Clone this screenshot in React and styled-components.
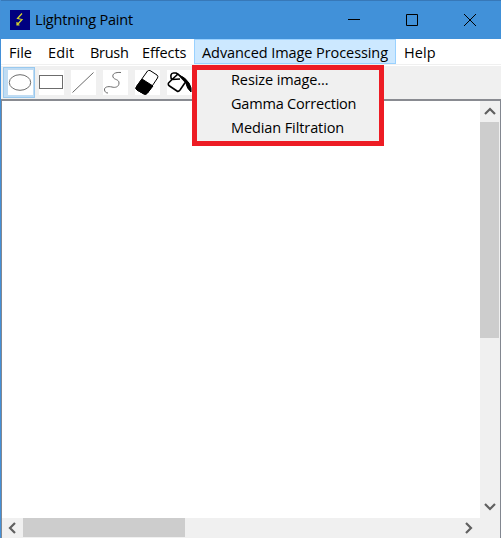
import React from "react";
import styled, { createGlobalStyle } from "styled-components";

const GlobalStyle = createGlobalStyle`
  * { box-sizing: border-box; }
  body { margin: 0; overflow: hidden; background: #fff; }
`;

const Window = styled.div`
  position: relative;
  display: flex;
  flex-direction: column;
  width: 501px;
  height: 538px;
  border-left: 1px solid #4390d8;
  background: #fff;
  color: #000;
  font: 14.5px/20px "Open Sans", "Noto Sans", sans-serif;
  white-space: nowrap;
  overflow: hidden;
`;

const TitleBar = styled.header`
  display: flex;
  align-items: center;
  flex: 0 0 39px;
  margin-left: -1px;
  padding: 0 2px 0 10px;
  border-top: 1px solid #3778b8;
  background: #4191d9;
`;

const AppIcon = styled.svg`
  width: 20px;
  height: 20px;
  margin: 0 5px 0 0;
`;

const Title = styled.span`
  flex: 1;
  letter-spacing: ${(p) => p.$track}px;
`;

const WindowButton = styled.div`
  display: grid;
  place-items: center;
  width: 58px;
  height: 38px;
`;

const MenuBar = styled.nav`
  display: flex;
  flex: 0 0 25px;
`;

const MenuItem = styled.div`
  width: ${(p) => p.$width}px;
  height: 25px;
  padding: 3px 0 0 7px;
  border: 1px solid ${(p) => (p.$open ? "#99d1ff" : "transparent")};
  background: ${(p) => (p.$open ? "#cce8ff" : "transparent")};
  letter-spacing: ${(p) => p.$track}px;
`;

const Toolbar = styled.div`
  display: flex;
  flex: 0 0 35px;
  padding: 1px 0 0 2px;
  border-top: 1px solid #f0f0f0;
  background: #f0f0f0;
  box-shadow: inset 0 1px #fff;
`;

const ToolButton = styled.button`
  display: flex;
  align-items: flex-start;
  justify-content: flex-start;
  width: 32px;
  height: 31px;
  margin-top: 1px;
  padding: ${(p) => (p.$active ? "2px 0 0 4px" : "2px 0 0 3px")};
  border: 1px solid ${(p) => (p.$active ? "#99c9ef" : "transparent")};
  background: ${(p) => (p.$active ? "#c0dcf3" : "transparent")};
`;

const ToolIcon = styled.svg`
  display: block;
  flex: none;
  width: 25px;
  height: 25px;
  background: #fff;
  fill: none;
  stroke: #6c6c6c;
`;

const Workspace = styled.main`
  display: grid;
  flex: 1;
  grid-template: 417px 20px / 478px 20px;
  border: solid #828790;
  border-width: 2px 1px 0 1px;
  border-top-color: #898b91;
`;

const Canvas = styled.div`
  background: #fff;
`;

const ScrollBar = styled.div`
  display: flex;
  flex-direction: ${(p) => (p.$vertical ? "column" : "row")};
  padding: ${(p) => (p.$vertical ? "0 1px 2px 0" : "0 2px 1px 0")};
  background: #f0f0f0;
`;

const ScrollArrow = styled.div`
  display: grid;
  place-items: center;
  flex: 0 0 21px;
`;

const ScrollThumb = styled.div`
  flex: 0 0 ${(p) => p.$length}px;
  background: #cdcdcd;
`;

const ScrollGap = styled.div`
  flex: 1;
`;

const Corner = styled.div`
  background: #f0f0f0;
`;

const Dropdown = styled.div`
  position: absolute;
  top: 65px;
  left: 191px;
  width: 192px;
  height: 81px;
  padding: 0 0 0 34px;
  border: 5px solid #ed1c24;
  background: #f0f0f0;
`;

const DropdownItem = styled.div`
  height: 24px;
  line-height: 20px;
  letter-spacing: ${(p) => p.$track}px;
`;

const menus = [
  ["File", 39, 0],
  ["Edit", 42, 0.15],
  ["Brush", 52, -0.3],
  ["Effects", 60, -0.1],
  ["Advanced Image Processing", 202, -0.08],
  ["Help", 48, 0.1],
];

const commands = [
  ["Resize image...", -0.1],
  ["Gamma Correction", -0.2],
  ["Median Filtration", -0.1],
];

const tools = [
  <ellipse key="e" cx="12" cy="12.5" rx="10.7" ry="7.8" />,
  <rect key="r" x=".5" y="5.5" width="23" height="13" />,
  <path key="l" d="M1.5 22.5L22.5 2.5" />,
  <path key="c" d="M18 2.5C12 2 9 4 10 7C11 10 16 9 16 13C16 17 12 18 9 17C5 16 1 17 1.5 20C2 22 3 23 5 23" />,
  <g key="x" stroke="#000">
    <path fill="#fff" d="M12.5 1Q13.5 0 15 .5L22 5Q23.5 6.5 22.5 8L12.5 23Q11 25 9 24L2 20Q0 18.5 1.5 16.5Z" />
    <path fill="#000" d="M7 9L18 16L12.5 23Q11 25 9 24L2 20Q0 18.5 1.5 16.5Z" />
  </g>,
  <g key="b" stroke="#000" strokeWidth="1.6" strokeLinejoin="round">
    <path d="M5 9.5L1.5 13Q.8 15 2.5 16L10 21Q11.5 22 13 20L18.5 12L11 4L5 9.5Q3.5 8 4 5Q4.5 3 6.5 3H9L12 5M5 9.5L13 9" />
    <path fill="#000" strokeWidth="1" d="M12 5Q18 7 22 13Q25 18 24 22Q20 19 18.5 12Z" />
  </g>,
];

const arrows = {
  up: "M2 9L7 4L12 9",
  down: "M2 5L7 10L12 5",
  left: "M9 2L4 7L9 12",
  right: "M5 2L10 7L5 12",
};

function Arrow({ direction }) {
  return (
    <ScrollArrow>
      <svg width="14" height="14" viewBox="0 0 14 14" fill="none" stroke="#606060" strokeWidth="2.2">
        <path d={arrows[direction]} />
      </svg>
    </ScrollArrow>
  );
}

export default function App() {
  return (
    <Window>
      <GlobalStyle />
      <TitleBar>
        <AppIcon viewBox="0 0 20 20">
          <path fill="#000080" d="M0 0H20V20H0Z" />
          <path fill="none" stroke="#d6d52d" strokeWidth="1.2" d="M12 3.5L7.5 8.5L12 9.5L7.5 14.5M7 12V15H9.5" />
        </AppIcon>
        <Title $track={-0.18}>Lightning Paint</Title>
        <WindowButton><svg width="12" height="12" stroke="#000"><path d="M0 5.5H12" /></svg></WindowButton>
        <WindowButton><svg width="12" height="12" stroke="#000" fill="none"><path d="M.5 .5H11.5V11.5H.5Z" /></svg></WindowButton>
        <WindowButton><svg width="12" height="12" stroke="#000"><path d="M0 0L12 12M12 0L0 12" /></svg></WindowButton>
      </TitleBar>
      <MenuBar>
        {menus.map(([name, width, track]) => (
          <MenuItem key={name} $width={width} $track={track} $open={name.startsWith("Advanced")}>{name}</MenuItem>
        ))}
      </MenuBar>
      <Toolbar>
        {tools.map((drawing, i) => (
          <ToolButton key={i} $active={i === 0}><ToolIcon viewBox="0 0 25 25">{drawing}</ToolIcon></ToolButton>
        ))}
      </Toolbar>
      <Workspace>
        <Canvas />
        <ScrollBar $vertical>
          <Arrow direction="up" />
          <ScrollThumb $length={216} />
          <ScrollGap />
          <Arrow direction="down" />
        </ScrollBar>
        <ScrollBar>
          <Arrow direction="left" />
          <ScrollThumb $length={162} />
          <ScrollGap />
          <Arrow direction="right" />
        </ScrollBar>
        <Corner />
      </Workspace>
      <Dropdown>
        {commands.map(([name, track]) => <DropdownItem key={name} $track={track}>{name}</DropdownItem>)}
      </Dropdown>
    </Window>
  );
}
